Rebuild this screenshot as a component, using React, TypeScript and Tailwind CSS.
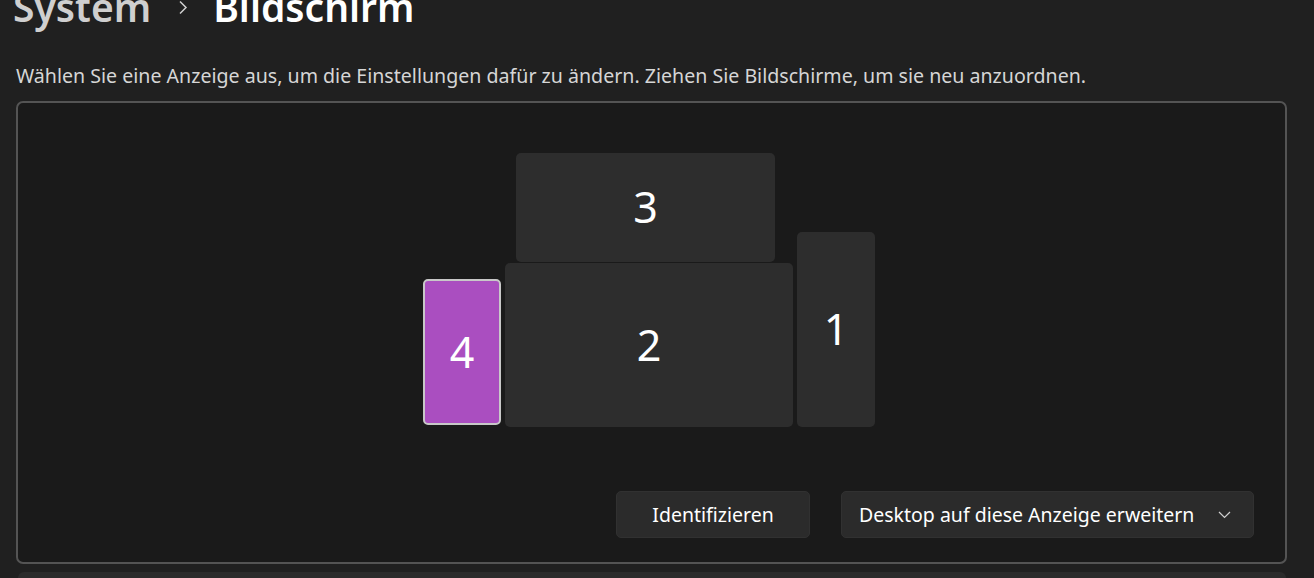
import React from "react";

const font = { fontFamily: '"Noto Sans", "Open Sans", sans-serif' };

function Monitor({
  n,
  cls,
}: {
  n: string;
  cls: string;
}) {
  return (
    <div className={`absolute flex items-center justify-center text-[43px] font-normal text-white ${cls}`}>
      {n}
    </div>
  );
}

export default function App() {
  return (
    <div
      className="relative w-[1314px] h-[578px] overflow-hidden bg-[#202020] text-white"
      style={font}
    >
      <div className="flex items-baseline mt-[-13px] ml-[13px] h-[40px] text-[39px] leading-[40px] font-semibold">
        <span className="text-[#cfcfcf]">System</span>
        <span className="ml-[27px] mr-[25px] self-start mt-[13px]">
          <svg width="10" height="15" viewBox="0 0 10 15" fill="none">
            <path d="M2 1.5 L8 7.5 L2 13.5" stroke="#cfcfcf" strokeWidth="1.5" />
          </svg>
        </span>
        <span className="text-white">Bildschirm</span>
      </div>
      <p className="mt-[37px] ml-[16px] text-[19.6px] leading-[24px] text-[#d6d6d6]">
        Wählen Sie eine Anzeige aus, um die Einstellungen dafür zu ändern. Ziehen Sie Bildschirme, um sie neu anzuordnen.
      </p>
      <div className="mt-[13px] ml-[16px] w-[1271px] h-[463px] rounded-[7px] border-2 border-[#545454] bg-[#1a1a1a] relative flex flex-col justify-end">
        <div className="absolute inset-0">
          <Monitor n="3" cls="left-[498px] top-[50px] w-[259px] h-[109px] rounded-[5px] bg-[#2d2d2d]" />
          <Monitor n="2" cls="left-[487px] top-[160px] w-[288px] h-[164px] rounded-[5px] bg-[#2d2d2d]" />
          <Monitor n="1" cls="left-[779px] top-[129px] w-[78px] h-[195px] rounded-[5px] bg-[#2d2d2d]" />
          <Monitor n="4" cls="left-[405px] top-[176px] w-[78px] h-[146px] rounded-[5px] bg-[#aa4ec0] border-2 border-[#c8c8c8]" />
        </div>
        <div className="relative flex justify-end gap-[31px] pr-[31px] pb-[24px]">
          <button className="w-[194px] h-[47px] rounded-[5px] bg-[#2b2b2b] border border-[#313131] text-[19.5px] text-white">
            Identifizieren
          </button>
          <button className="w-[413px] h-[47px] rounded-[5px] bg-[#2b2b2b] border border-[#313131] text-[19.5px] text-white flex items-center pl-[17px] pr-[22px] justify-between">
            <span>Desktop auf diese Anzeige erweitern</span>
            <svg width="13" height="8" viewBox="0 0 13 8" fill="none">
              <path d="M1 1 L6.5 6.5 L12 1" stroke="#d0d0d0" strokeWidth="1.2" />
            </svg>
          </button>
        </div>
      </div>
      <div className="mt-[8px] ml-[18px] w-[1268px] h-[20px] rounded-t-[6px] bg-[#2b2b2b]" />
    </div>
  );
}
